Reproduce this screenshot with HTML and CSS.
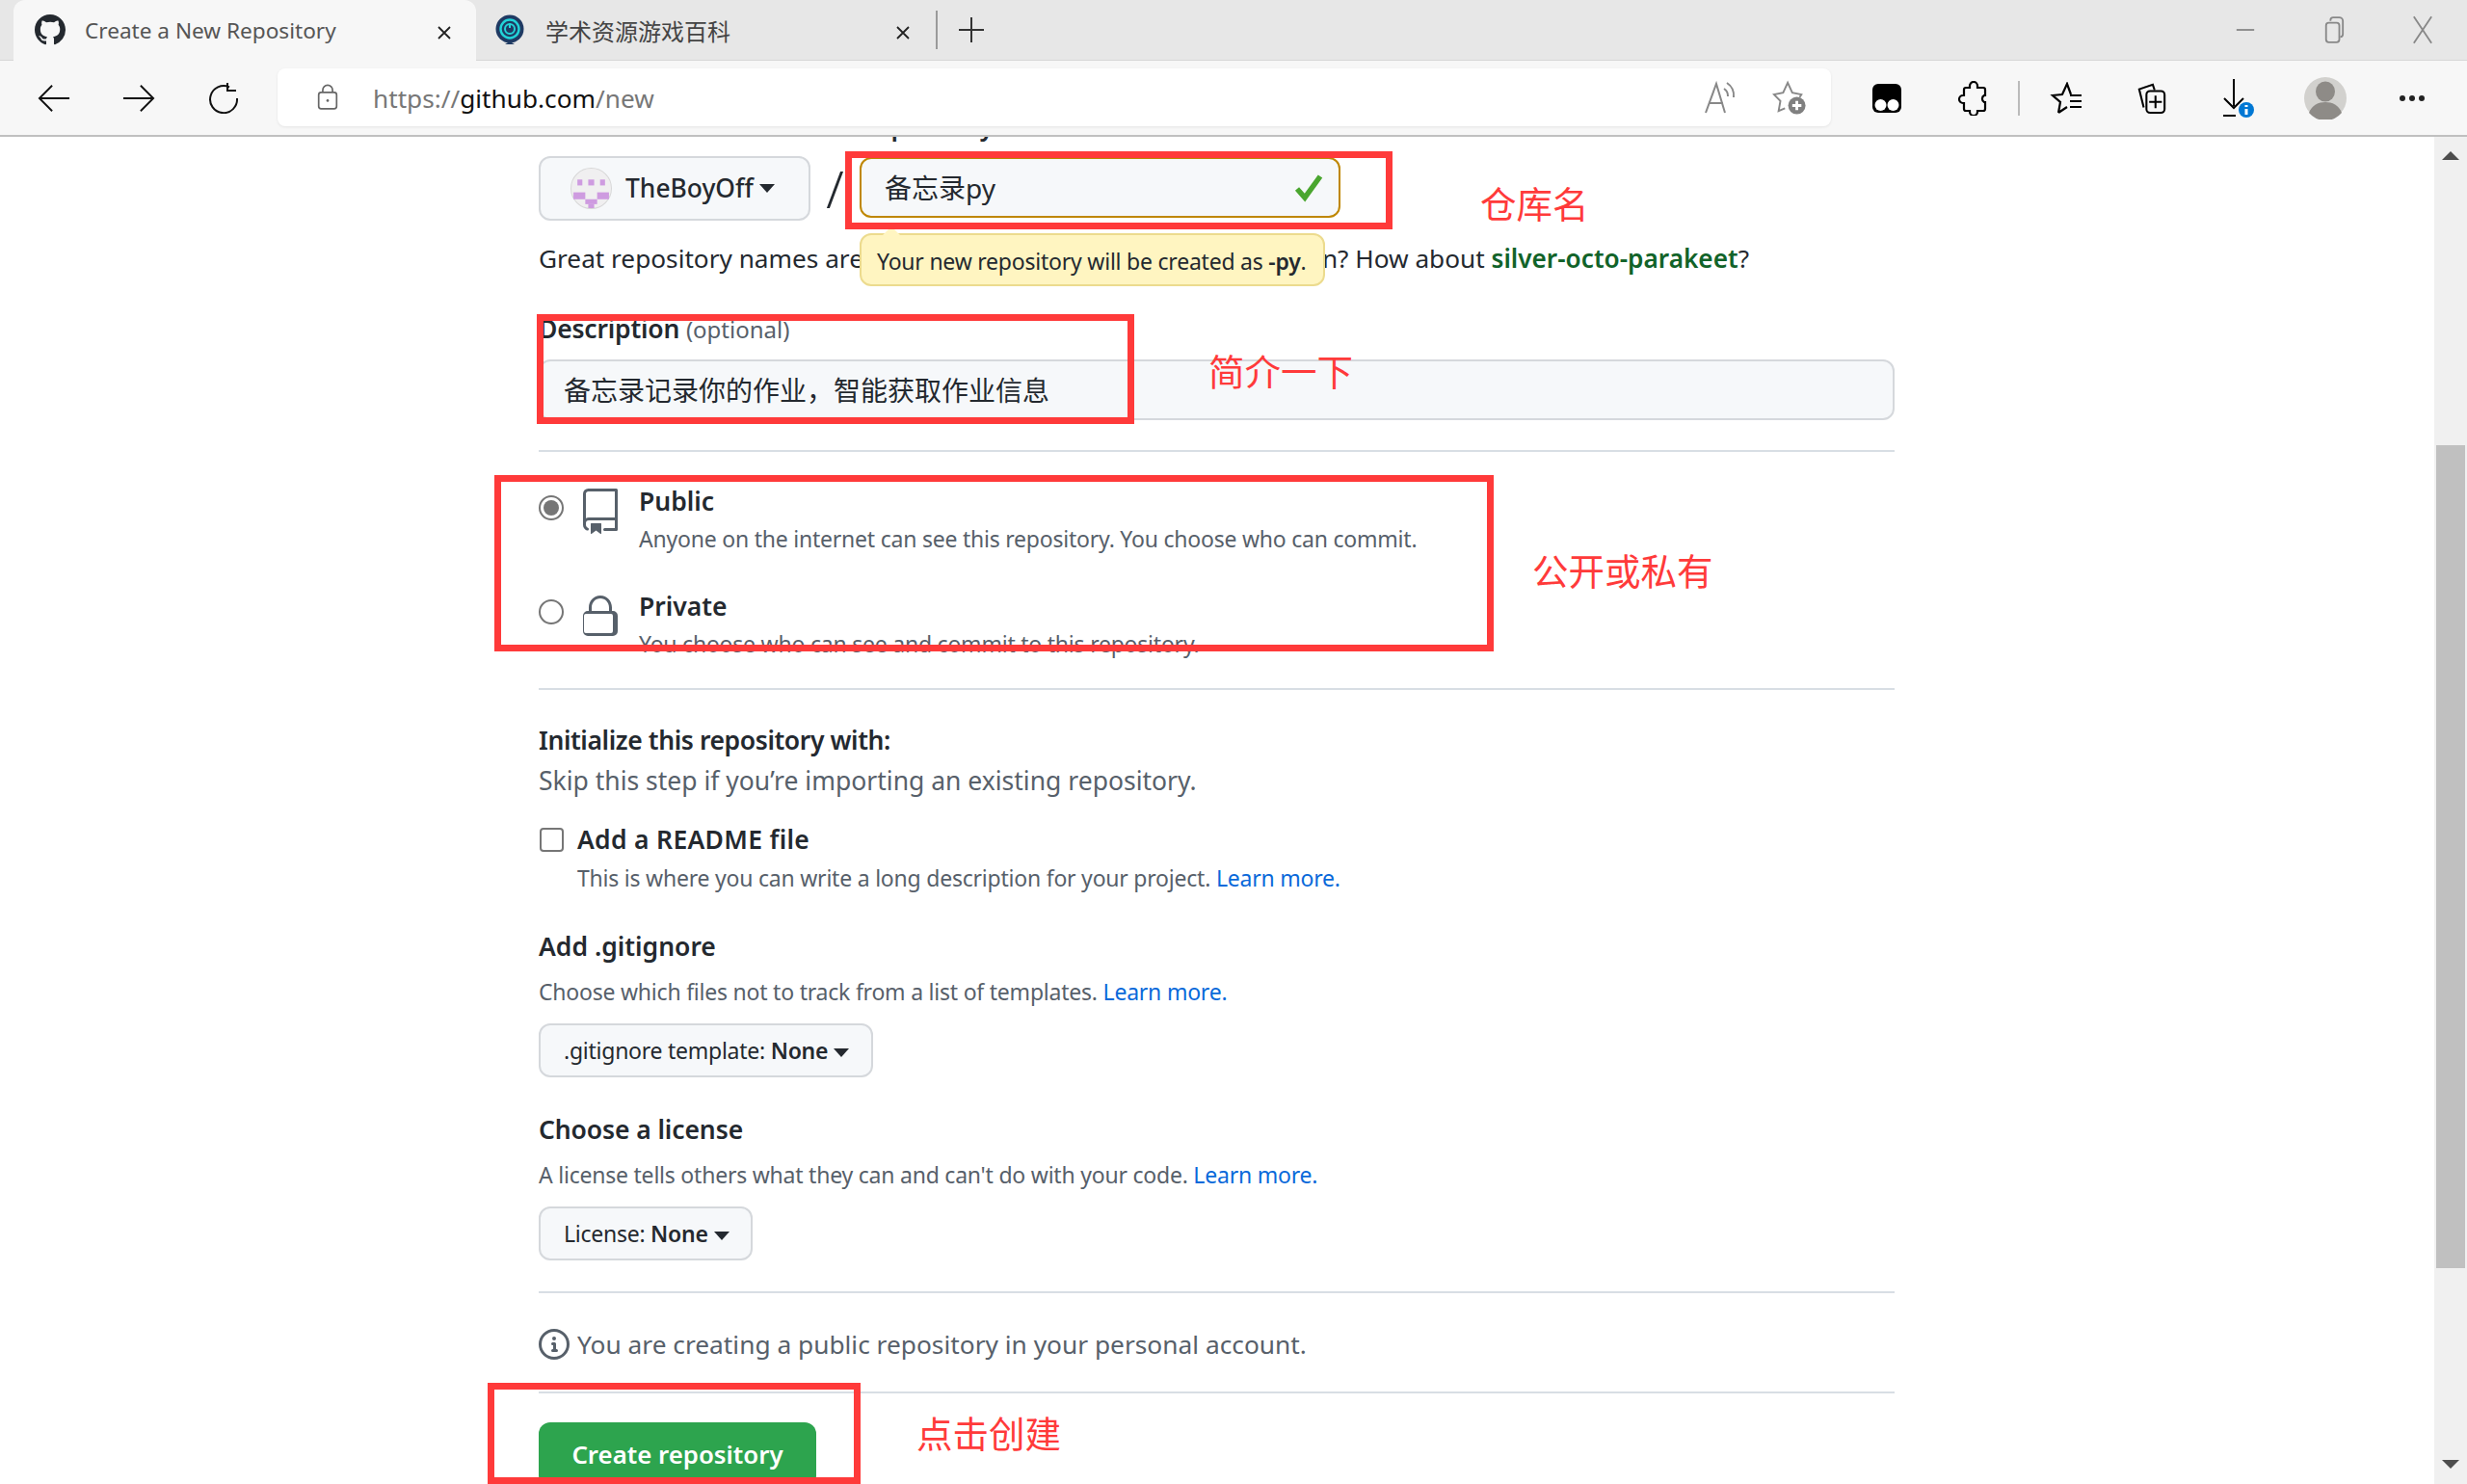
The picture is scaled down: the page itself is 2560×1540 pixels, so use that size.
FILE: index.html
```html
<!DOCTYPE html>
<html lang="zh">
<head>
<meta charset="utf-8">
<title>Create a New Repository</title>
<link rel="stylesheet" href="styles.css">
</head>
<body>
<div class="window">
  <header class="tabstrip">
    <div class="tab tab-active">
      <svg class="favicon" viewBox="0 0 16 16"><path fill="#24292f" d="M8 0C3.58 0 0 3.58 0 8c0 3.54 2.29 6.53 5.47 7.59.4.07.55-.17.55-.38 0-.19-.01-.82-.01-1.49-2.01.37-2.53-.49-2.69-.94-.09-.23-.48-.94-.82-1.13-.28-.15-.68-.52-.01-.53.63-.01 1.08.58 1.23.82.72 1.21 1.87.87 2.33.66.07-.52.28-.87.51-1.07-1.78-.2-3.64-.89-3.64-3.95 0-.87.31-1.59.82-2.15-.08-.2-.36-1.02.08-2.12 0 0 .67-.21 2.2.82.64-.18 1.32-.27 2-.27.68 0 1.36.09 2 .27 1.53-1.04 2.2-.82 2.2-.82.44 1.1.16 1.92.08 2.12.51.56.82 1.27.82 2.15 0 3.07-1.87 3.75-3.65 3.95.29.25.54.73.54 1.48 0 1.07-.01 1.93-.01 2.2 0 .21.15.46.55.38A8.013 8.013 0 0016 8c0-4.42-3.58-8-8-8z"/></svg>
      <span class="tab-title">Create a New Repository</span>
      <svg class="tab-close" viewBox="0 0 16 16"><path d="M2 2l12 12M14 2L2 14"/></svg>
    </div>
    <div class="tab tab-second">
      <svg class="favicon" viewBox="0 0 32 32"><circle cx="16" cy="15" r="14.5" fill="#1f3a63"/><path d="M11 31h10l-5-3z" fill="#1f3a63"/><circle cx="16" cy="15" r="9.5" fill="none" stroke="#22d3d8" stroke-width="2.4"/><path d="M16 9v5" stroke="#22d3d8" stroke-width="2"/><circle cx="16" cy="15" r="5" fill="none" stroke="#22d3d8" stroke-width="2"/></svg>
      <span class="tab-title">学术资源游戏百科</span>
      <svg class="tab-close" viewBox="0 0 16 16"><path d="M2 2l12 12M14 2L2 14"/></svg>
    </div>
    <span class="tab-sep"></span>
    <svg class="new-tab" viewBox="0 0 28 28"><path d="M14 1v26M1 14h26"/></svg>
    <div class="window-controls">
      <svg class="win-btn" viewBox="0 0 24 24"><path d="M2 12h20"/></svg>
      <svg class="win-btn" viewBox="0 0 24 32"><rect x="3" y="8" width="15" height="22" rx="3"/><path d="M8 6V5a3 3 0 0 1 3-3h7a4 4 0 0 1 4 4v15a3 3 0 0 1-3 3"/></svg>
      <svg class="win-btn" viewBox="0 0 24 32"><path d="M2 1l20 30M22 1L2 31"/></svg>
    </div>
  </header>

  <nav class="toolbar">
    <button class="nav-btn"><svg viewBox="0 0 36 32"><path d="M35 16H2M16 2L2 16l14 14"/></svg></button>
    <button class="nav-btn"><svg viewBox="0 0 36 32"><path d="M1 16h33M20 2l14 14-14 14"/></svg></button>
    <button class="nav-btn"><svg viewBox="0 0 32 32"><path d="M22 4.5A14 14 0 1 0 30 16"/><path d="M20 0v8h9"/></svg></button>
    <div class="address">
      <svg class="lock-ic" viewBox="0 0 26 32"><rect x="2" y="10" width="22" height="20" rx="3"/><path d="M7 10V7a6 6 0 0 1 12 0v3"/><circle class="dot" cx="13" cy="20" r="1.6"/></svg>
      <span class="url"><span class="url-dim">https://</span>github.com<span class="url-dim">/new</span></span>
      <svg class="addr-ic read-ic" viewBox="0 0 36 36"><path d="M2 34L13 4l9 30M6 24h14"/><path d="M21 9a9 9 0 0 1 4 8M24 3a16 16 0 0 1 7 15"/></svg>
      <svg class="addr-ic star-ic" viewBox="0 0 38 38"><path d="M14 31L7 34l2-11-7-7 10-2 5-11 5 11 10 2-2 3"/><circle class="fill-g" cx="27" cy="28" r="9.5"/><path class="plus" d="M27 23v10M22 28h10"/></svg>
    </div>
    <div class="ext ext-first"><svg viewBox="0 0 32 32"><rect x="1" y="1" width="30" height="30" rx="6" fill="#000"/><circle cx="9.5" cy="23" r="6" fill="#fff"/><circle cx="22.5" cy="23" r="6" fill="#fff"/></svg></div>
    <div class="ext"><svg class="stroke-ic" viewBox="0 0 32 36"><path d="M12 7V5a4 4 0 0 1 8 0v2h6a2 2 0 0 1 2 2v6h-1a4 4 0 0 0 0 7h1v7a2 2 0 0 1-2 2h-6v1a4 4 0 0 1-8 0v-1H8a2 2 0 0 1-2-2v-6H5a4 4 0 0 1 0-8h1V9a2 2 0 0 1 2-2z"/></svg></div>
    <span class="tool-sep"></span>
    <div class="ext"><svg class="stroke-ic star-list" viewBox="0 0 36 34"><path d="M10 32l2-11-8-7 10-1 5-11 4 11M10 32l9-6M22 14h12M22 20h12M22 26h12"/></svg></div>
    <div class="ext ext-coll"><svg class="stroke-ic" viewBox="0 0 34 36"><path d="M8 28L3 8l15-5 2 6"/><rect x="11" y="10" width="20" height="24" rx="4"/><path d="M21 15v14M14 22h14"/></svg></div>
    <div class="ext ext-dl"><svg viewBox="0 0 36 40"><path fill="none" stroke="#000" stroke-width="2" d="M13 0v28M3 20l10 10 10-10M2 38h13"/><circle cx="26" cy="33" r="8" fill="#0078d4" transform="translate(0 -1)"/><path d="M26 27v2M26 31v6" stroke="#fff" stroke-width="3"/></svg></div>
    <div class="ext ext-avatar"><svg viewBox="0 0 44 44"><circle cx="22" cy="22" r="22" fill="#d2d1ce"/><ellipse cx="22" cy="15" rx="10" ry="10.5" fill="#8e8b87"/><path d="M5 37c3-8 10-11 17-11s14 3 17 11a22 22 0 0 1-34 0z" fill="#8e8b87"/></svg></div>
    <div class="ext ext-more"><svg viewBox="0 0 28 8"><circle cx="4" cy="4" r="3"/><circle cx="14" cy="4" r="3"/><circle cx="24" cy="4" r="3"/></svg></div>
  </nav>

  <div class="viewport">
    <main class="page">
      <form class="form">
        <div class="owner-labels"><span class="lbl-owner">Owner *</span><span class="lbl-name">Repository name *</span></div>
        <div class="owner-row">
          <div class="owner-btn">
            <svg class="identicon" viewBox="0 0 42 42"><circle cx="21" cy="21" r="20.5" fill="#f0eff0" stroke="#d8d8d8"/><g fill="#ce9be0"><rect x="7" y="12" width="5" height="6"/><rect x="18" y="12" width="6" height="6"/><rect x="30" y="12" width="5" height="6"/><rect x="3" y="25" width="12" height="7"/><rect x="27" y="25" width="12" height="7"/><rect x="15" y="32" width="12" height="5"/><rect x="18" y="37" width="6" height="4"/></g></svg>
            <span class="owner-name">TheBoyOff</span>
            <span class="caret"></span>
          </div>
          <span class="slash">/</span>
          <div class="repo-input"><span class="repo-value">备忘录py</span><svg class="check" viewBox="0 0 30 30"><path d="M3 16l8 9L27 3" /></svg></div>
          <div class="tooltip">Your new repository will be created as <b>-py</b>.</div>
        </div>
        <p class="hint">Great repository names are short and memorable. Need inspiration? How about <strong class="suggest">silver-octo-parakeet</strong>?</p>

        <label class="desc-label">Description <span class="optional">(optional)</span></label>
        <div class="desc-input">备忘录记录你的作业，智能获取作业信息</div>
        <hr class="rule rule-a">

        <div class="option option-first">
          <span class="radio radio-on"></span>
          <svg class="opt-ic" viewBox="0 0 24 24"><path d="M3 2.75A2.75 2.75 0 0 1 5.75 0h14.5a.75.75 0 0 1 .75.75v20.5a.75.75 0 0 1-.75.75h-6a.75.75 0 0 1 0-1.5h5.25v-4H6A1.5 1.5 0 0 0 4.5 18v.75c0 .716.43 1.334 1.05 1.605a.75.75 0 0 1-.6 1.374A3.251 3.251 0 0 1 3 18.75ZM19.5 1.5H5.75c-.69 0-1.25.56-1.25 1.25v12.651A2.989 2.989 0 0 1 6 15h13.5Z"/><path d="M7 18.25a.25.25 0 0 1 .25-.25h5a.25.25 0 0 1 .25.25v5.01a.25.25 0 0 1-.397.201l-2.206-1.604a.25.25 0 0 0-.294 0L7.397 23.46a.25.25 0 0 1-.397-.2Z"/></svg>
          <div class="opt-text"><div class="opt-title">Public</div><div class="small muted opt-desc">Anyone on the internet can see this repository. You choose who can commit.</div></div>
        </div>
        <div class="option option-second">
          <span class="radio"></span>
          <svg class="opt-ic" viewBox="0 0 24 24"><path d="M6 9V7.25C6 3.845 8.503 1 12 1s6 2.845 6 6.25V9h.5a2.5 2.5 0 0 1 2.5 2.5v8a2.5 2.5 0 0 1-2.5 2.5h-13A2.5 2.5 0 0 1 3 19.5v-8A2.5 2.5 0 0 1 5.5 9Zm-1.5 1.5a1 1 0 0 0-1 1v8a1 1 0 0 0 1 1h13a1 1 0 0 0 1-1v-8a1 1 0 0 0-1-1ZM7.5 9h9V7.25c0-2.67-1.922-4.75-4.5-4.75-2.578 0-4.5 2.08-4.5 4.75Z"/></svg>
          <div class="opt-text"><div class="opt-title">Private</div><div class="small muted opt-desc">You choose who can see and commit to this repository.</div></div>
        </div>
        <hr class="rule rule-b">

        <div class="heading h-init">Initialize this repository with:</div>
        <div class="skip muted">Skip this step if you’re importing an existing repository.</div>
        <div class="check-row"><span class="checkbox"></span><span class="heading">Add a README file</span></div>
        <div class="small muted check-desc">This is where you can write a long description for your project. <a class="link">Learn more.</a></div>

        <div class="heading h-ignore">Add .gitignore</div>
        <div class="small muted sub">Choose which files not to track from a list of templates. <a class="link">Learn more.</a></div>
        <div class="select">.gitignore template: <b>None</b><span class="caret caret-sm"></span></div>

        <div class="heading h-license">Choose a license</div>
        <div class="small muted sub">A license tells others what they can and can't do with your code. <a class="link">Learn more.</a></div>
        <div class="select select-license">License: <b>None</b><span class="caret caret-sm"></span></div>
        <hr class="rule rule-c">

        <div class="info-row muted">
          <svg class="info-ic" viewBox="0 0 16 16"><path d="M0 8a8 8 0 1 1 16 0A8 8 0 0 1 0 8Zm8-6.5a6.5 6.5 0 1 0 0 13 6.5 6.5 0 0 0 0-13ZM6.5 7.75A.75.75 0 0 1 7.25 7h1a.75.75 0 0 1 .75.75v2.75h.25a.75.75 0 0 1 0 1.5h-2a.75.75 0 0 1 0-1.5h.25v-2h-.25a.75.75 0 0 1-.75-.75ZM8 6a1 1 0 1 1 0-2 1 1 0 0 1 0 2Z"/></svg>
          <span>You are creating a public repository in your personal account.</span>
        </div>
        <hr class="rule rule-d">
        <div class="create-btn">Create repository</div>
      </form>
    </main>
    <aside class="scrollbar">
      <span class="arrow arrow-up"></span>
      <span class="thumb"></span>
      <span class="arrow arrow-down"></span>
    </aside>
  </div>

  <div class="annotations">
    <span class="red-box box-name"></span>
    <span class="red-box box-desc"></span>
    <span class="red-box box-vis"></span>
    <span class="red-box box-create"></span>
    <span class="note note-name">仓库名</span>
    <span class="note note-desc">简介一下</span>
    <span class="note note-vis">公开或私有</span>
    <span class="note note-create">点击创建</span>
  </div>
</div>
</body>
</html>
```
FILE: styles.css
```css
* { box-sizing: border-box; }
html, body { margin: 0; height: 100%; overflow: hidden; background: #fff; }
body { font-family: "Noto Sans", "Noto Sans CJK SC", sans-serif; color: #24292f; }
.window { position: relative; width: 2560px; height: 1540px; display: flex; flex-direction: column; overflow: hidden; }

/* tab strip */
.tabstrip { height: 63px; background: #e7e7e7; display: flex; align-items: center; padding-left: 14px; flex: none; border-bottom: 1px solid #d6d6d6; }
.tab { height: 63px; display: flex; align-items: center; position: relative; font-size: 22.6px; color: #555; flex: none; }
.tab-active { width: 480px; background: #f7f7f7; border-radius: 12px 12px 0 0; padding-left: 22px; }
.tab-second { width: 476px; padding-left: 19px; font-size: 24px; color: #444; }
.favicon { width: 32px; height: 32px; flex: none; }
.tab-title { margin-left: 20px; white-space: nowrap; }
.tab-second .tab-title { margin-left: 21px; }
.tab-close { position: absolute; right: 25px; top: 26px; width: 16px; height: 16px; fill: none; stroke: #222; stroke-width: 1.8; }
.tab-sep { width: 2px; height: 40px; background: #9a9a9a; flex: none; margin-left: 1px; }
.new-tab { width: 28px; height: 28px; margin-left: 21px; fill: none; stroke: #333; stroke-width: 2; flex: none; }
.window-controls { margin-left: auto; display: flex; align-items: center; }
.win-btn { width: 22px; height: 32px; fill: none; stroke: #888; stroke-width: 2; margin-right: 70px; }
.win-btn:last-child { margin-right: 35px; }

/* toolbar */
.toolbar { height: 79px; background: #f7f7f7; border-bottom: 2px solid #c0c0c0; display: flex; align-items: center; padding-left: 12px; flex: none; }
.nav-btn { width: 88px; height: 60px; background: none; border: 0; padding: 0; display: flex; align-items: center; justify-content: center; }
.nav-btn svg { width: 34px; height: 32px; fill: none; stroke: #111; stroke-width: 2; }
.address { width: 1612px; height: 60px; margin-left: 12px; margin-top: -2px; background: #fff; border-radius: 8px; box-shadow: 0 1px 3px rgba(0,0,0,.08); display: flex; align-items: center; padding-left: 41px; }
.lock-ic { width: 22px; height: 28px; fill: none; stroke: #666; stroke-width: 2; flex: none; }
.lock-ic .dot { fill: #666; stroke: none; }
.url { margin-left: 36px; font-size: 26.2px; color: #111; position: relative; top: 1px; }
.url-dim { color: #777; }
.addr-ic { width: 36px; height: 36px; fill: none; stroke: #888; stroke-width: 2; flex: none; }
.read-ic { margin-left: auto; margin-right: 35px; }
.star-ic { margin-right: 25px; }
.fill-g { fill: #808080; stroke: none; }
.plus { stroke: #fff; stroke-width: 3; }
.ext { width: 90px; height: 60px; display: flex; align-items: center; justify-content: center; flex: none; }
.ext svg { width: 32px; height: 36px; }
.ext-first { margin-left: 13px; }
.ext-first svg { height: 32px; }
.stroke-ic { fill: none; stroke: #000; stroke-width: 2.2; }
.ext .star-list { width: 36px; height: 34px; }
.tool-sep { width: 2px; height: 36px; background: #bbb; flex: none; margin-left: 1px; margin-right: 3px; }
.ext-coll { margin-left: -1px; }
.ext-dl svg { width: 36px; height: 40px; }
.ext-avatar svg { width: 44px; height: 44px; }
.ext-more svg { width: 28px; height: 8px; fill: #222; }

/* viewport */
.viewport { flex: 1; display: flex; min-height: 0; background: #fff; }
.page { flex: 1; overflow: hidden; padding-left: 559px; }
.form { width: 1407px; font-size: 26.5px; }
.scrollbar { width: 34px; background: #f0f0f0; flex: none; display: flex; flex-direction: column; align-items: center; }
.thumb { width: 30px; height: 854px; margin-top: 296px; background: #c0c0c0; }
.arrow { width: 0; height: 0; border-left: 9px solid transparent; border-right: 9px solid transparent; }
.arrow-up { border-bottom: 9px solid #4d4d4d; margin-top: 15px; }
.arrow-down { border-top: 9px solid #4d4d4d; margin-top: 199px; }

/* form */
.owner-labels { margin-top: -32px; height: 40px; line-height: 40px; font-weight: 600; display: flex; }
.lbl-owner { width: 333px; }
.owner-row { margin-top: 12px; height: 67px; display: flex; align-items: flex-start; position: relative; }
.owner-btn { width: 282px; height: 67px; background: #f6f8fa; border: 2px solid #d5d8dc; border-radius: 12px; display: flex; align-items: center; padding-left: 31px; }
.identicon { width: 43px; height: 43px; flex: none; }
.owner-name { margin-left: 14px; font-weight: 500; font-size: 26.4px; position: relative; top: -1px; }
.caret { width: 0; height: 0; border-left: 8px solid transparent; border-right: 8px solid transparent; border-top: 9px solid #24292f; margin-left: 6px; }
.caret-sm { display: inline-block; vertical-align: middle; margin-left: 6px; }
.slash { width: 51px; text-align: center; font-size: 53px; line-height: 67px; color: #24292f; font-weight: 300; }
.repo-input { width: 499px; height: 63px; margin-top: 1px; background: #f6f8fa; border: 2px solid #bf8700; border-radius: 12px; display: flex; align-items: center; padding: 0 0 0 24px; font-size: 28px; }
.repo-value { position: relative; top: -1px; }
.check { width: 30px; height: 30px; margin-left: auto; margin-right: 16px; fill: none; stroke: #4aa62f; stroke-width: 5.5; }
.tooltip { position: absolute; left: 333px; top: 80px; width: 483px; height: 55px; background: #fff5c1; border: 2px solid #ecdb8e; border-radius: 12px; font-size: 23px; letter-spacing: -0.22px; line-height: 54px; padding-left: 16px; white-space: nowrap; color: #24292f; z-index: 2; }
.tooltip::before { content: ""; position: absolute; left: 22px; top: -9px; width: 0; height: 0; border-left: 9px solid transparent; border-right: 9px solid transparent; border-bottom: 9px solid #fff5c1; }
.tooltip b { font-weight: 600; }
.hint { margin: 19px 0 0; line-height: 40px; white-space: nowrap; font-size: 26.2px; }
.suggest { color: #116329; font-weight: 600; }
.desc-label { display: block; margin-top: 35px; line-height: 36px; font-weight: 600; letter-spacing: -0.2px; }
.optional { font-weight: 400; color: #57606a; font-size: 24px; letter-spacing: 0; }
.desc-input { margin-top: 13px; height: 63px; background: #f6f8fa; border: 2px solid #d5d8dc; border-radius: 12px; padding-left: 24px; line-height: 60px; font-size: 28px; color: #24292f; }
.rule { border: 0; height: 2px; background: #d8dee4; margin: 0; }
.rule-a { margin-top: 31px; }
.rule-b { margin-top: 28px; }
.rule-c { margin-top: 32px; }
.rule-d { margin-top: 31px; }
.small { font-size: 23px; letter-spacing: -0.22px; line-height: 36px; }
.muted { color: #57606a; }
.option { position: relative; padding-left: 104px; display: flex; }
.option-first { margin-top: 33px; }
.option-second { margin-top: 34px; }
.opt-title { font-weight: 600; line-height: 36px; font-size: 26.5px; }
.opt-desc { margin-top: 3px; white-space: nowrap; }
.radio { position: absolute; left: 0; top: 11px; width: 26px; height: 26px; border: 2px solid #767676; border-radius: 50%; background: #fff; }
.radio-on { top: 12px; }
.radio-on::after { content: ""; position: absolute; inset: 3px; border-radius: 50%; background: #767676; }
.opt-ic { position: absolute; left: 40px; top: 5px; width: 48px; height: 48px; fill: #57606a; }
.heading { font-weight: 600; line-height: 36px; }
.h-init { margin-top: 34px; letter-spacing: -0.4px; }
.skip { margin-top: 6px; line-height: 36px; }
.check-row { margin-top: 25px; display: flex; align-items: center; }
.check-row .heading { letter-spacing: 0.3px; }
.checkbox { width: 25px; height: 25px; border: 2px solid #767676; border-radius: 4px; background: #fff; margin-left: 1px; margin-right: 14px; }
.check-desc { margin-top: 4px; padding-left: 40px; }
.link { color: #0969da; }
.h-ignore { margin-top: 35px; }
.sub { margin-top: 11px; }
.select { margin-top: 15px; width: 347px; height: 56px; border: 2px solid #d5d8dc; border-radius: 12px; background: #f6f8fa; font-size: 23px; letter-spacing: -0.25px; line-height: 52px; padding-left: 24px; white-space: nowrap; }
.select b { font-weight: 600; }
.select-license { width: 222px; }
.h-license { margin-top: 36px; letter-spacing: -0.1px; }
.info-row { margin-top: 35px; display: flex; align-items: center; line-height: 36px; font-size: 26.3px; }
.info-ic { width: 32px; height: 32px; fill: #57606a; margin-right: 8px; flex: none; }
.create-btn { margin-top: 30px; width: 288px; height: 68px; background: #2da44e; color: #fff; border-radius: 12px; text-align: center; line-height: 66px; font-weight: 600; font-size: 25.8px; }

/* annotations drawn over the screenshot */
.annotations { position: absolute; inset: 0; pointer-events: none; z-index: 5; }
.red-box { position: absolute; border: 7px solid #ff3a3a; }
.box-name { left: 877px; top: 157px; width: 568px; height: 81px; }
.box-desc { left: 557px; top: 326px; width: 620px; height: 114px; }
.box-vis { left: 513px; top: 493px; width: 1037px; height: 183px; }
.box-create { left: 506px; top: 1435px; width: 387px; height: 105px; }
.note { position: absolute; color: #ff3a3a; font-family: "Noto Sans CJK SC", sans-serif; font-size: 37.5px; line-height: 44px; white-space: nowrap; font-weight: 400; }
.note-name { left: 1536px; top: 188px; }
.note-desc { left: 1254px; top: 362px; }
.note-vis { left: 1590px; top: 569px; }
.note-create { left: 951px; top: 1464px; }
```
